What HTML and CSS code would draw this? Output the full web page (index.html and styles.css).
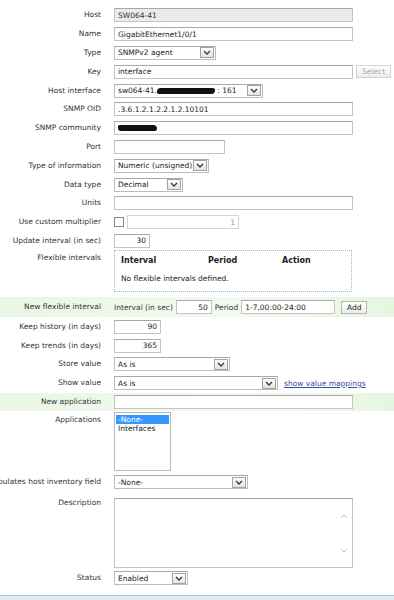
FILE: index.html
```html
<!DOCTYPE html>
<html lang="en">
<head>
  <meta charset="UTF-8">
  <title>Item</title>
  <link rel="stylesheet" href="styles.css">
</head>
<body>
  <div class="form">
    <div class="row">
      <div class="label">Host</div>
      <div class="field"><input class="text w-full is-disabled" value="SW064-41" readonly></div>
    </div>
    <div class="row">
      <div class="label">Name</div>
      <div class="field"><input class="text w-full" value="GigabitEthernet1/0/1"></div>
    </div>
    <div class="row">
      <div class="label">Type</div>
      <div class="field">
        <div class="select w-type"><span class="value">SNMPv2 agent</span><span class="arrow"><svg width="8" height="5" viewBox="0 0 8 5"><polyline points="1,1 4,4 7,1"/></svg></span></div>
      </div>
    </div>
    <div class="row">
      <div class="label">Key</div>
      <div class="field">
        <input class="text w-full" value="interface">
        <button class="btn is-disabled">Select</button>
      </div>
    </div>
    <div class="row">
      <div class="label">Host interface</div>
      <div class="field">
        <div class="select w-iface"><span class="value">sw064-41.<span class="blot blot-iface"></span> : 161</span><span class="arrow"><svg width="8" height="5" viewBox="0 0 8 5"><polyline points="1,1 4,4 7,1"/></svg></span></div>
      </div>
    </div>
    <div class="row">
      <div class="label">SNMP OID</div>
      <div class="field"><input class="text w-full" value=".3.6.1.2.1.2.2.1.2.10101"></div>
    </div>
    <div class="row">
      <div class="label">SNMP community</div>
      <div class="field"><div class="text w-full fake-input"><span class="blot blot-community"></span></div></div>
    </div>
    <div class="row">
      <div class="label">Port</div>
      <div class="field"><input class="text w-port" value=""></div>
    </div>
    <div class="row">
      <div class="label">Type of information</div>
      <div class="field">
        <div class="select w-info"><span class="value">Numeric (unsigned)</span><span class="arrow"><svg width="8" height="5" viewBox="0 0 8 5"><polyline points="1,1 4,4 7,1"/></svg></span></div>
      </div>
    </div>
    <div class="row">
      <div class="label">Data type</div>
      <div class="field">
        <div class="select w-data"><span class="value">Decimal</span><span class="arrow"><svg width="8" height="5" viewBox="0 0 8 5"><polyline points="1,1 4,4 7,1"/></svg></span></div>
      </div>
    </div>
    <div class="row">
      <div class="label">Units</div>
      <div class="field"><input class="text w-full" value=""></div>
    </div>
    <div class="row">
      <div class="label">Use custom multiplier</div>
      <div class="field">
        <span class="checkbox"></span>
        <input class="text w-mult num is-muted" value="1" readonly>
      </div>
    </div>
    <div class="row">
      <div class="label">Update interval (in sec)</div>
      <div class="field"><input class="text w-short num" value="30"></div>
    </div>
    <div class="row row-tall row-flex">
      <div class="label">Flexible intervals</div>
      <div class="field">
        <div class="flex-box">
          <div class="flex-head">
            <span class="col-interval">Interval</span>
            <span class="col-period">Period</span>
            <span class="col-action">Action</span>
          </div>
          <div class="flex-empty">No flexible intervals defined.</div>
        </div>
      </div>
    </div>
    <div class="row row-new row-newflex">
      <div class="label">New flexible interval</div>
      <div class="field">
        <span>Interval (in sec)</span>
        <input class="text w-short num" value="50">
        <span>Period</span>
        <input class="text w-period" value="1-7,00:00-24:00">
        <button class="btn btn-add">Add</button>
      </div>
    </div>
    <div class="row">
      <div class="label">Keep history (in days)</div>
      <div class="field"><input class="text w-keep num" value="90"></div>
    </div>
    <div class="row">
      <div class="label">Keep trends (in days)</div>
      <div class="field"><input class="text w-keep num" value="365"></div>
    </div>
    <div class="row">
      <div class="label">Store value</div>
      <div class="field">
        <div class="select w-store"><span class="value">As is</span><span class="arrow"><svg width="8" height="5" viewBox="0 0 8 5"><polyline points="1,1 4,4 7,1"/></svg></span></div>
      </div>
    </div>
    <div class="row">
      <div class="label">Show value</div>
      <div class="field">
        <div class="select w-show"><span class="value">As is</span><span class="arrow"><svg width="8" height="5" viewBox="0 0 8 5"><polyline points="1,1 4,4 7,1"/></svg></span></div>
        <a class="link" href="#">show value mappings</a>
      </div>
    </div>
    <div class="row row-new">
      <div class="label">New application</div>
      <div class="field"><input class="text w-full" value=""></div>
    </div>
    <div class="row row-tall row-apps">
      <div class="label">Applications</div>
      <div class="field">
        <div class="listbox">
          <div class="option is-selected">-None-</div>
          <div class="option">Interfaces</div>
        </div>
      </div>
    </div>
    <div class="row">
      <div class="label">Populates host inventory field</div>
      <div class="field">
        <div class="select w-inv"><span class="value">-None-</span><span class="arrow"><svg width="8" height="5" viewBox="0 0 8 5"><polyline points="1,1 4,4 7,1"/></svg></span></div>
      </div>
    </div>
    <div class="row row-tall row-desc">
      <div class="label">Description</div>
      <div class="field">
        <div class="textarea">
          <div class="scroll">
            <svg width="8" height="5" viewBox="0 0 8 5"><polyline points="1,4 4,1 7,4"/></svg>
            <svg width="8" height="5" viewBox="0 0 8 5"><polyline points="1,1 4,4 7,1"/></svg>
          </div>
        </div>
      </div>
    </div>
    <div class="row">
      <div class="label">Status</div>
      <div class="field">
        <div class="select w-status"><span class="value">Enabled</span><span class="arrow"><svg width="8" height="5" viewBox="0 0 8 5"><polyline points="1,1 4,4 7,1"/></svg></span></div>
      </div>
    </div>
  </div>
  <div class="footer-bar"></div>
</body>
</html>
```

FILE: styles.css
```css
body {
  margin: 0;
  width: 394px;
  height: 600px;
  overflow: hidden;
  background: #fff;
  font-family: "DejaVu Sans", Verdana, sans-serif;
  font-size: 7.5px;
  color: #333;
}
.form {
  padding-top: 6px;
}
.row {
  display: grid;
  grid-template-columns: 101px 1fr;
  column-gap: 13px;
  align-items: center;
  height: 18.8px;
}
.label {
  display: flex;
  justify-content: flex-end;
  white-space: nowrap;
  line-height: 10px;
}
.field {
  display: flex;
  align-items: center;
  gap: 3px;
  white-space: nowrap;
}

/* inputs */
.text {
  box-sizing: border-box;
  height: 14px;
  margin: 0;
  padding: 0 3px;
  border: 1px solid #c4c4c4;
  border-top-color: #a8a8a8;
  background: #fff;
  font: inherit;
  color: #222;
  outline: none;
}
.text.num {
  text-align: right;
}
.is-disabled.text {
  background: #ebebeb;
  color: #333;
}
.is-muted {
  color: #999;
  border-color: #d6d6d6;
}
.fake-input {
  display: flex;
  align-items: center;
}
.w-full { width: 239px; }
.w-port { width: 111px; }
.w-short { width: 36px; }
.w-keep { width: 47px; }
.w-mult { width: 112px; }
.w-period { width: 94px; }

/* selects */
.select {
  box-sizing: border-box;
  display: flex;
  align-items: center;
  height: 14px;
  padding: 0 1px 0 3px;
  border: 1px solid #bdbdbd;
  border-top-color: #a8a8a8;
  background: #fff;
  color: #222;
}
.select .value {
  flex: 1;
  overflow: hidden;
  white-space: nowrap;
}
.select .arrow {
  box-sizing: border-box;
  display: flex;
  align-items: center;
  justify-content: center;
  width: 14px;
  height: 11px;
  border: 1px solid #a3a3a3;
  background: linear-gradient(#fdfdfd, #e4e4e4);
}
svg polyline {
  fill: none;
  stroke: #2e3550;
  stroke-width: 1.3;
}
.w-type { width: 102px; }
.w-iface { width: 149px; }
.w-info { width: 95px; }
.w-data { width: 69px; }
.w-store { width: 116px; }
.w-show { width: 164px; }
.w-inv { width: 134px; }
.w-status { width: 74px; }

.blot {
  display: inline-block;
  background: #111;
  border-radius: 3px;
  vertical-align: middle;
}
.blot-iface {
  width: 58px;
  height: 6px;
  transform: skewX(-10deg);
}
.blot-community {
  width: 39px;
  height: 6px;
  border-radius: 2px 5px 3px 4px;
}

/* buttons */
.btn {
  box-sizing: border-box;
  height: 13px;
  margin: 0;
  padding: 0 5px;
  border: 1px solid #b3b3b3;
  background: linear-gradient(#ffffff, #ececec);
  font: inherit;
  color: #222;
}
.btn.is-disabled {
  width: 35px;
  color: #a8a8a8;
  border-color: #d2d2d2;
  margin-left: 0;
}
.btn-add {
  width: 26px;
  margin-left: 3px;
  padding: 0;
}

.checkbox {
  box-sizing: border-box;
  width: 10px;
  height: 10px;
  border: 1px solid #8a8a8a;
  background: #fff;
}

/* flexible intervals */
.row-tall {
  align-items: start;
  height: auto;
}
.row-flex {
  padding-bottom: 5px;
}
.row-flex .label {
  padding-top: 3px;
}
.flex-box {
  box-sizing: border-box;
  width: 238px;
  height: 42px;
  padding: 5px 6px;
  border: 1px dotted #a5b4cf;
}
.flex-head {
  display: flex;
  font-size: 8px;
  font-weight: bold;
  color: #222;
  line-height: 10px;
}
.col-interval { width: 87px; }
.col-period { width: 74px; }
.flex-empty {
  margin-top: 8px;
  color: #222;
}

/* green rows */
.row-new {
  background: linear-gradient(90deg, #eaf7e4, #f1faee 60%, #e6f6df);
}
.row-newflex {
  height: 20px;
}
.row-newflex .field span {
  margin-right: 0;
}
.link {
  margin-left: 3px;
  color: #3a4ca6;
  text-decoration: underline;
}

/* applications */
.row-apps {
  height: 61.4px;
}
.row-apps .label {
  padding-top: 4px;
}
.listbox {
  box-sizing: border-box;
  width: 57px;
  height: 59px;
  margin-top: 1px;
  padding: 2px 1px;
  border: 1px solid #b9b9b9;
  background: #fff;
  color: #222;
  line-height: 9px;
}
.option {
  padding-left: 2px;
}
.option.is-selected {
  background: #3399ff;
  color: #fff;
}

/* description */
.row-desc {
  height: 77.2px;
}
.row-desc .label {
  padding-top: 6px;
}
.textarea {
  box-sizing: border-box;
  display: flex;
  justify-content: flex-end;
  width: 239px;
  height: 70px;
  margin-top: 6px;
  border: 1px solid #c4c4c4;
  border-top-color: #a8a8a8;
  background: #fff;
}
.scroll {
  display: flex;
  flex-direction: column;
  justify-content: space-between;
  align-items: center;
  width: 16px;
  padding: 15px 0 14px;
}
.scroll polyline {
  stroke: #b9b9b9;
  stroke-width: 1;
}

.footer-bar {
  margin-top: 7px;
  height: 8px;
  border-top: 1px solid #b3c9df;
  background: #e1eaf4;
}
```
